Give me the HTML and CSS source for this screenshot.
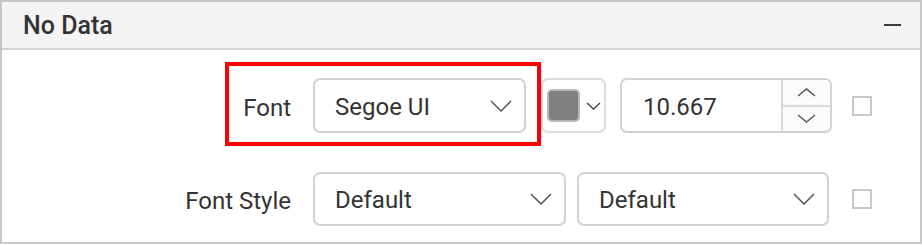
FILE: index.html
```html
<!DOCTYPE html>
<html lang="en">
<head>
    <meta charset="UTF-8">
    <meta name="viewport" content="width=device-width, initial-scale=1.0">
    <title>No Data</title>
    <link rel="stylesheet" href="styles.css">
</head>
<body>

    <div class="panel">
        <div class="panel-header">
            <span class="panel-title">No Data</span>
            <span class="collapse-icon"></span>
        </div>

        <div class="panel-body">
            <div class="prop-row">
                <label class="prop-label">Font</label>
                <div class="prop-controls">
                    <div class="dropdown font-name">
                        <span class="dropdown-text">Segoe UI</span>
                        <svg class="chevron" width="22" height="12" viewBox="0 0 22 12"><path d="M1 1 L11 11 L21 1" fill="none" stroke="#555" stroke-width="1.5"/></svg>
                    </div>
                    <div class="color-picker">
                        <span class="swatch"></span>
                        <svg class="chevron-small" width="15" height="8" viewBox="0 0 15 8"><path d="M1 1 L7.5 7 L14 1" fill="none" stroke="#444" stroke-width="1.4"/></svg>
                    </div>
                    <div class="numeric">
                        <span class="numeric-value">10.667</span>
                        <div class="spinner">
                            <span class="spin-btn">
                                <svg width="19" height="9" viewBox="0 0 19 9"><path d="M1 8 L9.5 1 L18 8" fill="none" stroke="#555" stroke-width="1.4"/></svg>
                            </span>
                            <span class="spin-btn">
                                <svg width="19" height="9" viewBox="0 0 19 9"><path d="M1 1 L9.5 8 L18 1" fill="none" stroke="#555" stroke-width="1.4"/></svg>
                            </span>
                        </div>
                    </div>
                </div>
                <span class="checkbox"></span>
            </div>

            <div class="prop-row">
                <label class="prop-label">Font Style</label>
                <div class="prop-controls">
                    <div class="dropdown font-style">
                        <span class="dropdown-text">Default</span>
                        <svg class="chevron" width="22" height="12" viewBox="0 0 22 12"><path d="M1 1 L11 11 L21 1" fill="none" stroke="#555" stroke-width="1.5"/></svg>
                    </div>
                    <div class="dropdown font-weight">
                        <span class="dropdown-text">Default</span>
                        <svg class="chevron" width="22" height="12" viewBox="0 0 22 12"><path d="M1 1 L11 11 L21 1" fill="none" stroke="#555" stroke-width="1.5"/></svg>
                    </div>
                </div>
                <span class="checkbox"></span>
            </div>
        </div>

        <div class="highlight"></div>
    </div>

</body>
</html>
```

FILE: styles.css
```css
* {
    margin: 0;
    padding: 0;
    box-sizing: border-box;
}

body {
    font-family: Roboto, "Liberation Sans", sans-serif;
    color: #333;
    background: #fff;
}

.panel {
    position: relative;
    width: 922px;
    height: 244px;
    border: 2px solid #c8c8c8;
}

.panel-header {
    height: 48px;
    background: #f4f4f4;
    border-bottom: 2px solid #d4d4d4;
    display: flex;
    align-items: center;
    justify-content: space-between;
    padding: 0 19px 0 21px;
}

.panel-title {
    font-size: 25px;
    font-weight: 500;
    color: #333;
}

.collapse-icon {
    width: 17px;
    height: 2px;
    background: #3c3c3c;
}

.panel-body {
    padding-top: 28px;
    display: flex;
    flex-direction: column;
    gap: 39px;
}

.prop-row {
    display: flex;
    align-items: center;
}

.prop-label {
    width: 289px;
    margin-right: 22px;
    padding-top: 4px;
    text-align: right;
    font-size: 24px;
    color: #333;
}

.prop-controls {
    width: 519px;
    display: flex;
    align-items: center;
}

.dropdown {
    height: 55px;
    border: 2px solid #d2d2d2;
    border-radius: 7px;
    display: flex;
    align-items: center;
    justify-content: space-between;
    padding: 0 12px 0 20px;
    font-size: 24px;
}

.dropdown-text {
    padding-top: 2px;
}

.font-name {
    width: 213px;
    margin-right: 15px;
}

.font-style {
    width: 253px;
    height: 54px;
    margin-right: 11px;
}

.font-weight {
    width: 252px;
    height: 54px;
}

.color-picker {
    width: 65px;
    height: 55px;
    border: 2px solid #dcdcdc;
    border-radius: 7px;
    display: flex;
    align-items: center;
    padding-left: 4px;
    margin-right: 14px;
}

.swatch {
    width: 33px;
    height: 33px;
    background: #808080;
    border: 2px solid #b8b8b8;
    border-radius: 5px;
    margin-right: 6px;
}

.numeric {
    width: 212px;
    height: 55px;
    border: 2px solid #d2d2d2;
    border-radius: 7px;
    display: flex;
    overflow: hidden;
}

.numeric-value {
    flex: 1;
    display: flex;
    align-items: center;
    padding: 2px 0 0 21px;
    font-size: 24px;
}

.spinner {
    width: 49px;
    border-left: 2px solid #d8d8d8;
    background: #fbfbfb;
    display: flex;
    flex-direction: column;
}

.spin-btn {
    flex: 1;
    display: flex;
    align-items: center;
    justify-content: center;
}

.spin-btn + .spin-btn {
    border-top: 2px solid #d8d8d8;
}

.checkbox {
    width: 20px;
    height: 20px;
    border: 2px solid #c8c8c8;
    margin-left: 20px;
}

.highlight {
    position: absolute;
    left: 223px;
    top: 60px;
    width: 316px;
    height: 84px;
    border: 4px solid #ff0000;
}
```
